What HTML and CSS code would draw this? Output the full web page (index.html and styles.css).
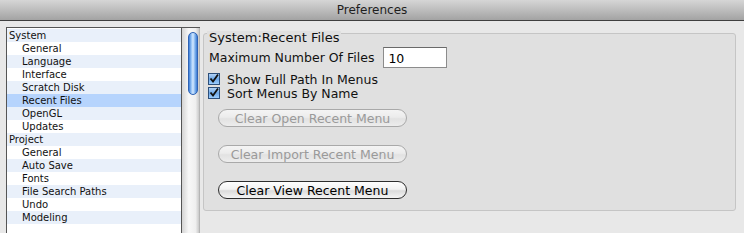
FILE: index.html
```html
<!DOCTYPE html>
<html lang="en">
  <head>
    <meta charset="UTF-8" />
    <title>Preferences</title>
    <link rel="stylesheet" href="styles.css">
  </head>
  <body>
    <div class="titlebar">Preferences</div>

    <div class="main">
      <div class="list-box">
        <ul class="tree">
          <li class="group-row">System</li>
          <li>General</li>
          <li>Language</li>
          <li>Interface</li>
          <li>Scratch Disk</li>
          <li class="selected">Recent Files</li>
          <li>OpenGL</li>
          <li>Updates</li>
          <li class="group-row">Project</li>
          <li>General</li>
          <li>Auto Save</li>
          <li>Fonts</li>
          <li>File Search Paths</li>
          <li>Undo</li>
          <li>Modeling</li>
        </ul>
        <div class="scrollbar">
          <div class="thumb"></div>
        </div>
      </div>

      <div class="panel">
        <span class="panel-title">System:Recent Files</span>

        <div class="field-row">
          <label for="maxFiles">Maximum Number Of Files</label>
          <input type="text" id="maxFiles" class="text-field" value="10" />
        </div>

        <div class="checks">
          <div class="check-row">
            <svg class="check" width="12" height="12" viewBox="0 0 12 12">
              <defs>
                <linearGradient id="cb" x1="0" y1="0" x2="0" y2="1">
                  <stop offset="0" stop-color="#b9d7f7" />
                  <stop offset="0.5" stop-color="#6ea8e8" />
                  <stop offset="1" stop-color="#9fd0ff" />
                </linearGradient>
              </defs>
              <rect x="0.5" y="0.5" width="11" height="11" fill="url(#cb)" stroke="#2d4f7a" />
              <path d="M2.5 5.5 L5 8.5 L10 1.5" fill="none" stroke="#111" stroke-width="1.8" />
            </svg>
            <span>Show Full Path In Menus</span>
          </div>
          <div class="check-row">
            <svg class="check" width="12" height="12" viewBox="0 0 12 12">
              <rect x="0.5" y="0.5" width="11" height="11" fill="url(#cb)" stroke="#2d4f7a" />
              <path d="M2.5 5.5 L5 8.5 L10 1.5" fill="none" stroke="#111" stroke-width="1.8" />
            </svg>
            <span>Sort Menus By Name</span>
          </div>
        </div>

        <div class="buttons">
          <button class="pill" disabled>Clear Open Recent Menu</button>
          <button class="pill" disabled>Clear Import Recent Menu</button>
          <button class="pill">Clear View Recent Menu</button>
        </div>
      </div>
    </div>
  </body>
</html>
```

FILE: styles.css
```css
* {
  margin: 0;
  padding: 0;
  box-sizing: border-box;
}

body {
  font-family: "DejaVu Sans", "Liberation Sans", sans-serif;
  background: #e8e8e8;
  color: #111;
  height: 233px;
  overflow: hidden;
}

.titlebar {
  height: 21px;
  background: linear-gradient(#d6d6d6, #a3a3a3);
  border-bottom: 1px solid #3f3f3f;
  text-align: center;
  font-size: 12px;
  line-height: 20px;
  color: #1e1e1e;
}

.main {
  display: flex;
  align-items: flex-start;
  padding: 6px 8px 0 6px;
}

.list-box {
  display: flex;
  width: 194px;
  height: 206px;
  border-top: 1px solid #555;
  border-left: 1px solid #555;
  background: #fff;
}

.tree {
  list-style: none;
  width: 175px;
  border-right: 1px solid #555;
  padding-top: 1px;
  font-size: 10px;
  background: #fff;
}

.tree li {
  height: 13px;
  line-height: 13px;
  padding-left: 15px;
  white-space: nowrap;
}

.tree li:nth-child(odd) {
  background: #e9f0fa;
}

.tree li.group-row {
  padding-left: 2px;
}

.tree li.selected {
  background: #b6d4fd;
}

.scrollbar {
  width: 18px;
  padding: 4px 2px 0 6px;
  background: linear-gradient(to right, #d4d4d4, #f8f8f8 40%, #efefef 80%, #c9c9c9);
  border-right: 1px solid #b5b5b5;
}

.thumb {
  width: 10px;
  height: 63px;
  border-radius: 5px;
  border: 1px solid #2f63b5;
  background: linear-gradient(to right, #3d7fd8, #a9d0fa 35%, #d4e8ff 50%, #7fb3ee 75%, #3c7ad2);
}

.panel {
  flex: 1;
  margin: 6px 0 0 3px;
  height: 178px;
  border: 1px solid #c5c5c5;
  border-radius: 3px;
  background: #e0e0e0;
  padding: 0 5px;
  font-size: 12.5px;
}

.panel-title {
  display: inline-block;
  margin: -3px 0 0 -2px;
  padding: 0 2px;
  font-size: 13px;
  line-height: 14px;
  background: #e0e0e0;
  vertical-align: top;
}

.field-row {
  display: flex;
  align-items: center;
  gap: 9px;
  margin-top: -2px;
}

.text-field {
  width: 64px;
  height: 21px;
  border: 1px solid #8c8c8c;
  border-top-color: #6a6a6a;
  padding: 2px 4px 0;
  font-family: inherit;
  font-size: 12.5px;
  background: #fff;
}

.checks {
  margin: 4px 0 0 -1px;
}

.check-row {
  display: flex;
  align-items: center;
  gap: 7px;
  height: 14px;
}

.buttons {
  display: flex;
  flex-direction: column;
  align-items: flex-start;
  gap: 18px;
  margin-top: 9px;
  padding-left: 9px;
}

.pill {
  width: 189px;
  height: 18px;
  border-radius: 9px;
  border: 1px solid #2e2e2e;
  background: linear-gradient(#fefefe, #f2f2f2 45%, #dcdcdc 55%, #f4f4f4);
  font-family: inherit;
  font-size: 12.5px;
  color: #000;
}

.pill:disabled {
  border-color: #a9a9a9;
  color: #9a9a9a;
  background: linear-gradient(#f4f4f4, #ececec 45%, #e2e2e2 55%, #ededed);
}
```
